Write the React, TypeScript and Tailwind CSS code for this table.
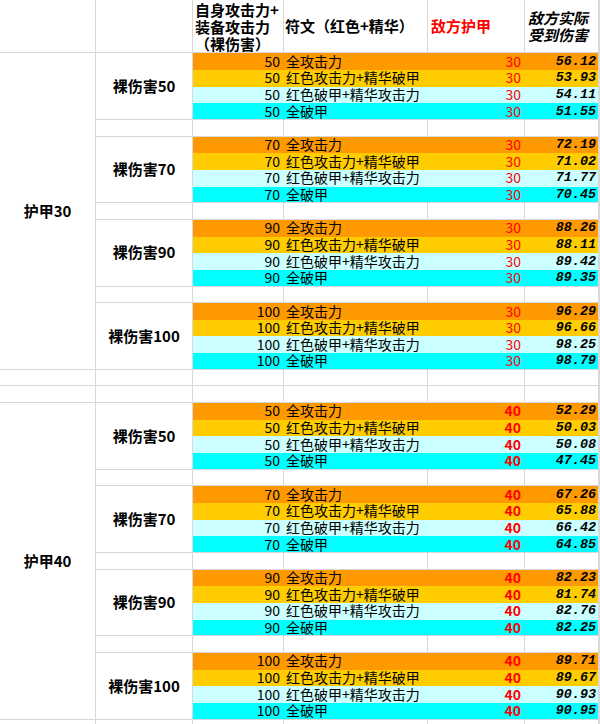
import React from "react";

const RUNES = ["全攻击力", "红色攻击力+精华破甲", "红色破甲+精华攻击力", "全破甲"];
const FILLS = ["bg-[#ff9900]", "bg-[#ffcc00]", "bg-[#ccffff]", "bg-[#00ffff]"];
const DMG = [50, 70, 90, 100];

const BLOCKS = [
  {
    armor: 30,
    bold: false,
    values: [
      ["56.12", "53.93", "54.11", "51.55"],
      ["72.19", "71.02", "71.77", "70.45"],
      ["88.26", "88.11", "89.42", "89.35"],
      ["96.29", "96.66", "98.25", "98.79"],
    ],
  },
  {
    armor: 40,
    bold: true,
    values: [
      ["52.29", "50.03", "50.08", "47.45"],
      ["67.26", "65.88", "66.42", "64.85"],
      ["82.23", "81.74", "82.76", "82.25"],
      ["89.71", "89.67", "90.93", "90.95"],
    ],
  },
];

const cell = "border-r border-b border-[#d8d8d8] min-w-0";

function Blank({ n }: { n: number }) {
  return (
    <>
      {Array.from({ length: n }).map((_, i) => (
        <div key={i} className={cell} />
      ))}
    </>
  );
}

function DataRow({
  dmg,
  rune,
  idx,
  armor,
  bold,
  value,
}: {
  dmg: number;
  rune: string;
  idx: number;
  armor: number;
  bold: boolean;
  value: string;
}) {
  const fill = FILLS[idx];
  const bottom = idx === 3 ? "border-b-[#d8d8d8]" : "border-b-transparent";
  const base = `border-r border-b min-w-0 flex items-center whitespace-nowrap ${fill} ${bottom}`;
  return (
    <>
      <div className={`${base} border-r-transparent justify-end pr-[3px] text-[14px] leading-[15px]`}>{dmg}</div>
      <div className={`${base} border-r-transparent pl-[2px] text-[14px] leading-[15px]`}>{rune}</div>
      <div
        className={`${base} border-r-transparent justify-end pr-[3px] text-[14px] leading-[15px] text-[#ff0000] ${
          bold ? "font-bold" : ""
        }`}
      >
        {armor}
      </div>
      <div
        className={`${base} border-r-[#d8d8d8] justify-end pr-[2px] text-[13.4px] leading-[15px] font-bold italic font-['Liberation_Mono',monospace]`}
      >
        {value}
      </div>
      <div className={cell} />
    </>
  );
}

export default function App() {
  return (
    <div className="w-[600px] h-[724px] overflow-hidden bg-white text-black font-['Noto_Sans_CJK_SC',sans-serif]">
      <div className="grid grid-cols-[96px_97px_91px_144px_97px_74px_1fr] grid-rows-[53.33px_repeat(42,16.667px)]">
        {/* header */}
        <div className={cell} />
        <div className={cell} />
        <div className={`${cell} flex items-center pl-[2px] text-[15px] leading-[17px] font-bold whitespace-nowrap`}>
          <div>
            自身攻击力+
            <br />
            装备攻击力
            <br />
            （裸伤害）
          </div>
        </div>
        <div className={`${cell} flex items-center pl-[1px] text-[15px] font-bold whitespace-nowrap`}>
          符文（红色+精华）
        </div>
        <div className={`${cell} flex items-center pl-[3px] text-[15px] font-bold text-[#ff0000] whitespace-nowrap`}>
          敌方护甲
        </div>
        <div className={`${cell} flex items-center pl-[3px] text-[15px] leading-[17px] font-bold italic whitespace-nowrap`}>
          <div>
            敌方实际
            <br />
            受到伤害
          </div>
        </div>
        <div className={cell} />

        {BLOCKS.map((b, bi) => (
          <React.Fragment key={b.armor}>
            <div className={`${cell} row-span-19 flex items-center justify-center text-[15px] font-bold`}>
              护甲{b.armor}
            </div>
            {DMG.map((d, gi) => (
              <React.Fragment key={d}>
                <div className={`${cell} row-span-4 flex items-center justify-center text-[15px] font-bold`}>
                  裸伤害{d}
                </div>
                {RUNES.map((r, ri) => (
                  <DataRow
                    key={r}
                    dmg={d}
                    rune={r}
                    idx={ri}
                    armor={b.armor}
                    bold={b.bold}
                    value={b.values[gi][ri]}
                  />
                ))}
                {gi < 3 && <Blank n={6} />}
              </React.Fragment>
            ))}
            {bi === 0 && <Blank n={14} />}
          </React.Fragment>
        ))}
        <Blank n={7} />
      </div>
    </div>
  );
}
